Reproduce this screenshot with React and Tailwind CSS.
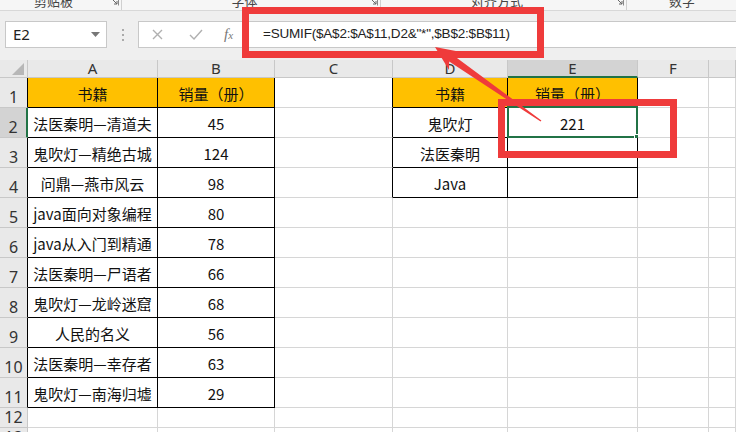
import React from 'react';

const COLS = ['A', 'B', 'C', 'D', 'E', 'F', 'G'];

const ROWS = [
  ['书籍', '销量（册）', '', '书籍', '销量（册）'],
  ['法医秦明—清道夫', '45', '', '鬼吹灯', '221'],
  ['鬼吹灯—精绝古城', '124', '', '法医秦明', ''],
  ['问鼎—燕市风云', '98', '', 'Java', ''],
  ['java面向对象编程', '80'],
  ['java从入门到精通', '78'],
  ['法医秦明—尸语者', '66'],
  ['鬼吹灯—龙岭迷窟', '68'],
  ['人民的名义', '56'],
  ['法医秦明—幸存者', '63'],
  ['鬼吹灯—南海归墟', '29'],
  [],
  [],
];

const FONT = { fontFamily: '"Noto Sans", "Noto Sans CJK SC", sans-serif' };
const CJK = { fontFamily: '"Noto Sans CJK SC", "Noto Sans", sans-serif' };

function RibbonLabels() {
  const groups = [
    { label: '剪贴板', w: 'w-[123px]' },
    { label: '字体', w: 'w-[259px]' },
    { label: '对齐方式', w: 'w-[246px]' },
    { label: '数字', w: 'w-[108px]', last: true },
  ];
  return (
    <div className="h-[11px] overflow-hidden flex border-b border-[#d8d8d8] bg-[#f6f6f6]" style={CJK}>
      {groups.map((g) => (
        <div key={g.label} className={`${g.w} shrink-0 flex items-start relative`}>
          <span className="flex-1 text-center text-[13px] leading-none -mt-[6px] text-[#444]">{g.label}</span>
          {!g.last && (
            <span className="w-[14px] flex items-start justify-center -mt-[3px]">
              <svg width="9" height="9" viewBox="0 0 9 9">
                <path d="M0.5 0.5 H8.5 V8.5" fill="none" stroke="#888" strokeWidth="1" />
                <path d="M2 2 L7 7 M4 7 H7 V4" fill="none" stroke="#666" strokeWidth="1" />
              </svg>
            </span>
          )}
          {!g.last && <span className="w-px h-full bg-[#d0d0d0] mr-[1px]" />}
        </div>
      ))}
    </div>
  );
}

function FormulaBar() {
  return (
    <div className="h-[49px] bg-[#efefef] pt-[10px] pb-[12px] pl-[5px] flex">
      <div className="w-[102px] h-[27px] bg-white border border-[#c8c8c8] flex items-center pl-[7px] pr-[6px]">
        <span className="flex-1 text-[15px] text-[#222]">E2</span>
        <svg width="9" height="6" viewBox="0 0 9 6">
          <path d="M0 0 H9 L4.5 5 Z" fill="#777" />
        </svg>
      </div>
      <div className="w-[31px] flex flex-col items-center justify-center gap-[3px]">
        <span className="w-[2px] h-[2px] bg-[#aaa]" />
        <span className="w-[2px] h-[2px] bg-[#aaa]" />
        <span className="w-[2px] h-[2px] bg-[#aaa]" />
      </div>
      <div className="flex-1 h-[27px] bg-white border border-[#c8c8c8] border-r-0 flex items-center">
        <div className="w-[104px] flex items-center">
          <svg className="ml-[13px]" width="11" height="11" viewBox="0 0 11 11">
            <path d="M1 1 L10 10 M10 1 L1 10" stroke="#b0b0b0" strokeWidth="1.4" />
          </svg>
          <svg className="ml-[26px]" width="14" height="11" viewBox="0 0 14 11">
            <path d="M1 6 L5 10 L13 1" fill="none" stroke="#b0b0b0" strokeWidth="1.4" />
          </svg>
          <span
            className="ml-[21px] italic text-[15px] text-[#777] leading-none"
            style={{ fontFamily: '"Liberation Serif", serif' }}
          >
            f<span className="text-[11px]">x</span>
          </span>
        </div>
        <span
          className="ml-[20px] text-[13.5px] tracking-[-0.2px] text-[#222] whitespace-nowrap"
          style={{ fontFamily: '"Liberation Sans", Arial, sans-serif' }}
        >
          =SUMIF($A$2:$A$11,D2&amp;"*",$B$2:$B$11)
        </span>
      </div>
    </div>
  );
}

function cellClass(r, c) {
  // r: 1-based row, c: column index 0=A
  const t1 = c <= 1 && r <= 11;
  const t2 = (c === 3 || c === 4) && r <= 4;
  const rightBlack = (c <= 1 && r <= 11) || ((c === 2 || c === 3 || c === 4) && r <= 4);
  const bottomBlack = t1 || t2;
  const yellow = r === 1 && (c === 0 || c === 1 || c === 3 || c === 4);
  return [
    'relative flex items-center justify-center border-r border-b text-[15px] text-[#111] whitespace-nowrap pt-[3px]',
    rightBlack ? 'border-r-black' : 'border-r-[#d6d6d6]',
    bottomBlack ? 'border-b-black' : 'border-b-[#d6d6d6]',
    yellow ? 'bg-[#ffc000]' : 'bg-white',
  ].join(' ');
}

function Sheet() {
  return (
    <div className="grid grid-cols-[28px_130px_117px_118px_115px_130px_71px_1fr] grid-rows-[18px_repeat(11,30px)_20px_20px]">
      <div className="bg-[#e9e9e9] border-r border-b border-[#c8c8c8] flex items-end justify-end pr-[3px] pb-[2px]">
        <svg width="12" height="12" viewBox="0 0 12 12">
          <path d="M12 0 V12 H0 Z" fill="#b7b7b7" />
        </svg>
      </div>
      {COLS.map((col) => (
        <div
          key={col}
          className={
            col === 'E'
              ? 'bg-[#d3d3d3] border-r border-[#c8c8c8] border-b-2 border-b-[#217346] flex items-center justify-center text-[15px] text-[#333] leading-none'
              : 'bg-[#e9e9e9] border-r border-b border-[#c8c8c8] flex items-center justify-center text-[15px] text-[#333] leading-none'
          }
        >
          {col === 'G' ? '' : col}
        </div>
      ))}
      {ROWS.map((row, i) => {
        const r = i + 1;
        return (
          <React.Fragment key={r}>
            <div
              className={
                r === 2
                  ? 'bg-[#d3d3d3] border-b border-b-[#c8c8c8] border-r-2 border-r-[#217346] flex items-end justify-center text-[16px] text-[#333] leading-none pb-[2px]'
                  : r <= 11
                  ? 'bg-[#e9e9e9] border-b border-b-[#c8c8c8] border-r border-r-black flex items-end justify-center text-[16px] text-[#333] leading-none pb-[2px]'
                  : 'bg-[#e9e9e9] border-b border-b-[#c8c8c8] border-r border-r-[#c8c8c8] flex items-end justify-center text-[16px] text-[#333] leading-none pb-[2px]'
              }
            >
              {r}
            </div>
            {COLS.map((col, c) => (
              <div key={col} className={cellClass(r, c)} style={CJK}>
                {row[c] || ''}
                {r === 2 && col === 'E' && (
                  <div className="absolute -left-[1px] -top-[2px] -right-[1px] -bottom-[1px] border-2 border-[#217346]">
                    <span className="absolute -right-[4px] -bottom-[4px] w-[6px] h-[6px] bg-[#217346] border border-white" />
                  </div>
                )}
              </div>
            ))}
          </React.Fragment>
        );
      })}
    </div>
  );
}

function Annotations() {
  return (
    <>
      <div className="absolute left-[242px] top-[7px] w-[302px] h-[51px] border-[7px] border-[#ef3b3b]" />
      <div className="absolute left-[498px] top-[99px] w-[179px] h-[59px] border-[7px] border-[#ef3b3b]" />
      <svg className="absolute left-0 top-0 pointer-events-none" width="736" height="432" viewBox="0 0 736 432">
        <polygon
          points="435,47 461,52 453.6,55.4 541.4,120.4 540.6,121.6 449.2,61.4 449,70"
          fill="#ef3b3b"
        />
      </svg>
    </>
  );
}

export default function App() {
  return (
    <div className="relative w-[736px] h-[432px] overflow-hidden bg-white" style={FONT}>
      <RibbonLabels />
      <FormulaBar />
      <Sheet />
      <Annotations />
    </div>
  );
}
